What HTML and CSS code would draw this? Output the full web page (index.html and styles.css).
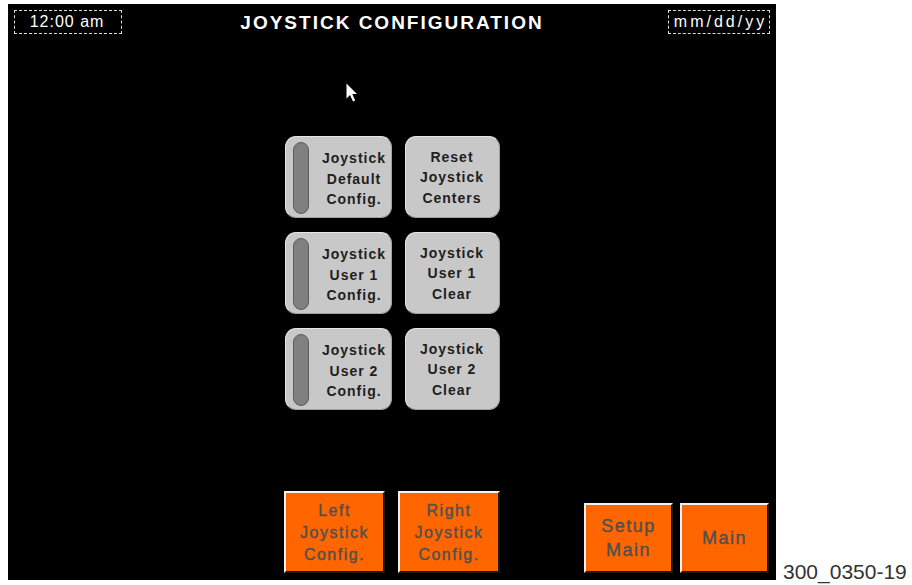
FILE: index.html
```html
<!DOCTYPE html>
<html lang="en">
<head>
  <meta charset="UTF-8">
  <title>Joystick Configuration</title>
  <link rel="stylesheet" href="styles.css">
</head>
<body>

  <div class="page">
    <div class="screen">

      <div class="header">
        <div class="box time">12:00 am</div>
        <h1>JOYSTICK CONFIGURATION</h1>
        <div class="box date">mm/dd/yy</div>
      </div>

      <svg class="cursor" width="13" height="20" viewBox="0 0 13 20">
        <path d="M0.5 0.5 L0.5 15.5 L4 12 L7 18.5 L9.2 17.5 L6.3 11 L11 11 Z" fill="#fff"/>
      </svg>

      <div class="grid">
        <div class="key with-bar">
          <span class="bar"></span>
          <span class="label">Joystick<br>Default<br>Config.</span>
        </div>
        <div class="key">
          <span class="label">Reset<br>Joystick<br>Centers</span>
        </div>
        <div class="key with-bar">
          <span class="bar"></span>
          <span class="label">Joystick<br>User 1<br>Config.</span>
        </div>
        <div class="key">
          <span class="label">Joystick<br>User 1<br>Clear</span>
        </div>
        <div class="key with-bar">
          <span class="bar"></span>
          <span class="label">Joystick<br>User 2<br>Config.</span>
        </div>
        <div class="key">
          <span class="label">Joystick<br>User 2<br>Clear</span>
        </div>
      </div>

      <div class="footer">
        <div class="group left">
          <button class="nav tall wide1">Left<br>Joystick<br>Config.</button>
          <button class="nav tall wide2">Right<br>Joystick<br>Config.</button>
        </div>
        <div class="group right">
          <button class="nav short">Setup<br>Main</button>
          <button class="nav short">Main</button>
        </div>
      </div>

    </div>
    <div class="figure-id">300_0350-19</div>
  </div>

</body>
</html>
```

FILE: styles.css
```css
* {
  box-sizing: border-box;
}

body {
  margin: 0;
  background: #fff;
  font-family: "Liberation Sans", Arial, sans-serif;
}

.page {
  display: flex;
  align-items: flex-end;
  width: 912px;
  height: 585px;
}

.screen {
  position: relative;
  display: flex;
  flex-direction: column;
  width: 768px;
  height: 576px;
  margin: 4px 0 5px 8px;
  padding: 6px 6px 7px 6px;
  background: #000;
  color: #fff;
}

.figure-id {
  margin: 0 0 3px 7px;
  font-size: 21px;
  line-height: 21px;
  color: #333;
}

/* Header */
.header {
  display: grid;
  grid-template-columns: 1fr auto 1fr;
  align-items: center;
  height: 24px;
}

.box {
  height: 24px;
  border: 1px dashed #ddd;
  font-size: 16px;
  line-height: 22px;
  text-align: center;
}

.time {
  justify-self: start;
  width: 108px;
  letter-spacing: 1px;
  padding-right: 2px;
}

.date {
  justify-self: end;
  width: 102px;
  letter-spacing: 3px;
  padding-left: 3px;
}

h1 {
  margin: 0;
  padding-top: 1px;
  font-size: 19px;
  letter-spacing: 2px;
  font-weight: bold;
}

.cursor {
  position: absolute;
  left: 338px;
  top: 79px;
}

/* Grey keys */
.grid {
  display: grid;
  grid-template-columns: 107px 95px;
  grid-auto-rows: 82px;
  gap: 14px 13px;
  justify-content: center;
  margin-top: 102px;
}

.key {
  display: flex;
  align-items: center;
  justify-content: center;
  padding-top: 1px;
  background: #c8c8c8;
  border-radius: 11px;
  border: 1px solid #a0a0a0;
  border-top-color: #e6e6e6;
  border-left-color: #e6e6e6;
  color: #1e1e1e;
  font-size: 14px;
  font-weight: bold;
  letter-spacing: 1px;
  line-height: 20.5px;
}

.key.with-bar {
  align-items: stretch;
  padding: 5px 0 3px 7px;
}

.bar {
  width: 16px;
  background: #808080;
  border: 1px solid #5c5c5c;
  border-radius: 8px;
}

.label {
  text-align: center;
}

.with-bar .label {
  flex: 1;
  align-self: center;
  padding: 2px 0 0 9px;
}

/* Orange nav buttons */
.footer {
  display: flex;
  align-items: flex-end;
  margin-top: auto;
}

.group {
  display: flex;
  align-items: flex-end;
}

.group.left {
  gap: 13px;
  margin-left: 270px;
}

.group.right {
  gap: 7px;
  margin-left: auto;
  margin-right: 1px;
}

.nav {
  padding: 0;
  background: #ff6600;
  border: 2px solid #1a1a1a;
  border-top-color: #f2f2f2;
  border-left-color: #f2f2f2;
  color: #505050;
  -webkit-text-stroke: 0.4px #505050;
  font-family: "Liberation Sans", Arial, sans-serif;
  cursor: pointer;
}

.nav.tall {
  height: 82px;
  padding-top: 2px;
  font-size: 16px;
  letter-spacing: 1.5px;
  line-height: 22px;
}

.wide1 {
  width: 101px;
}

.wide2 {
  width: 102px;
}

.nav.short {
  width: 89px;
  height: 70px;
  font-size: 18px;
  letter-spacing: 1.5px;
  line-height: 24px;
}
```
